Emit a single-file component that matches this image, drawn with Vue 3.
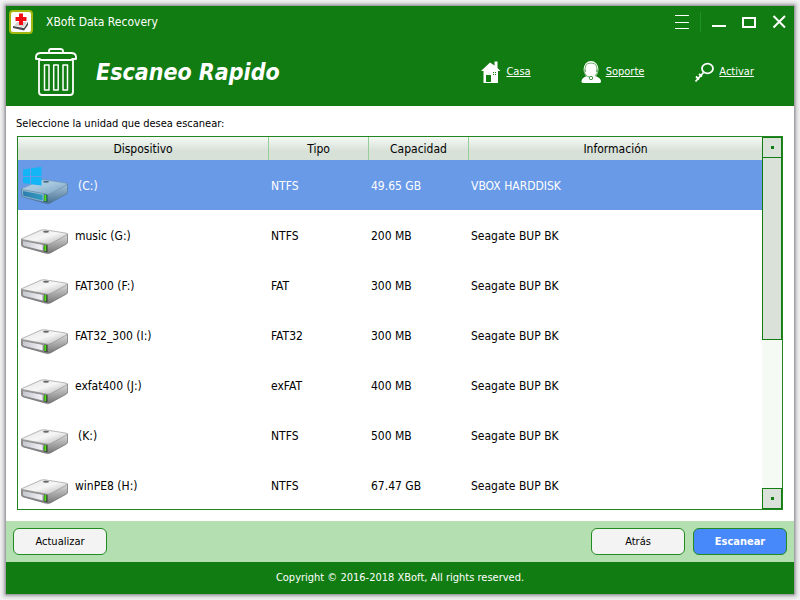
<script setup>
const rows = [
  { name: '(C:)', type: 'NTFS', size: '49.65 GB', info: 'VBOX HARDDISK', active: true, indent: true },
  { name: 'music (G:)', type: 'NTFS', size: '200 MB', info: 'Seagate BUP BK' },
  { name: 'FAT300 (F:)', type: 'FAT', size: '300 MB', info: 'Seagate BUP BK' },
  { name: 'FAT32_300 (I:)', type: 'FAT32', size: '300 MB', info: 'Seagate BUP BK' },
  { name: 'exfat400 (J:)', type: 'exFAT', size: '400 MB', info: 'Seagate BUP BK' },
  { name: '(K:)', type: 'NTFS', size: '500 MB', info: 'Seagate BUP BK', indent: true },
  { name: 'winPE8 (H:)', type: 'NTFS', size: '67.47 GB', info: 'Seagate BUP BK' },
]
</script>

<template>
  <div class="frame">
    <div class="window">
      <header class="top">
        <div class="titlebar">
          <svg class="logo" viewBox="0 0 24 24" aria-hidden="true">
            <rect x="1" y="1" width="22" height="22" rx="3" fill="#fff" stroke="#a3b80e" stroke-width="2" />
            <path d="M4 16l11 2 4-6v3l-4 5.500L4 18z" fill="#4d4d4d" />
            <path d="M5 15.500l3-3.500 10 0-3.500 5z" fill="#d5d5d5" />
            <path d="M10 3.500h4V7h3.500v4H14v4h-4v-4H6.500V7H10z" fill="#f30d12" />
          </svg>
          <span class="app-name">XBoft Data Recovery</span>
          <div class="controls">
            <button class="ctl" type="button" aria-label="Menú">
              <svg viewBox="0 0 16 16"><path d="M1 1.500h14M1 8.500h14M1 14.500h14" stroke="#fff" stroke-width="1" /></svg>
            </button>
            <span class="split"></span>
            <button class="ctl" type="button" aria-label="Minimizar">
              <svg viewBox="0 0 16 16"><path d="M1 12h14" stroke="#fff" stroke-width="2" /></svg>
            </button>
            <button class="ctl" type="button" aria-label="Maximizar">
              <svg viewBox="0 0 16 16"><path d="M2 4h12v9H2z" fill="none" stroke="#fff" stroke-width="2" /></svg>
            </button>
            <button class="ctl" type="button" aria-label="Cerrar">
              <svg viewBox="0 0 16 16"><path d="M2.500 2l11.500 11.500M14 2L2.500 13.500" stroke="#fff" stroke-width="2" /></svg>
            </button>
          </div>
        </div>
        <div class="banner">
          <svg class="trash" viewBox="0 0 42 48" fill="none" stroke="#fff" stroke-width="1.800" stroke-linejoin="round" aria-hidden="true">
            <path d="M14 5V3q0-2 2-2h9q3 0 3 2v2" />
            <path d="M1 11V9q0-4 5-4h30q5 0 5 4v2h-4q0 1-1 1H6q-1 0-1-1z" />
            <path d="M4 12v32q0 3 3 3h28q3 0 3-3V12" />
            <path d="M9.500 17h4.500v25H9.500zM18.700 17h4.500v25h-4.500zM28 17h4.500v25H28z" stroke-width="1.500" />
          </svg>
          <h1>Escaneo Rapido</h1>
          <nav class="links">
            <a href="#casa">
              <svg viewBox="0 0 20 24" aria-hidden="true">
                <path d="M2.500 11H0L9 2.500l4.500 3V1.500h3V8l3 3h-2.500v12H2.500z" fill="#fff" />
                <path d="M5 15h5v7H5zM12 12h1v1h-1zM14 12h1v1h-1zM12 14h1v1h-1zM14 14h1v1h-1z" fill="#117c11" />
              </svg>
              <span>Casa</span>
            </a>
            <a href="#soporte">
              <svg viewBox="0 0 20 24" aria-hidden="true">
                <path d="M.5 21.500q0-4 5.500-5.500h8q6 1.500 6 5.500 0 1.500-2 1.500H2.500q-2 0-2-1.500z" fill="#fff" />
                <ellipse cx="10" cy="9.500" rx="7.500" ry="8.500" fill="#fff" />
                <path d="M4.500 12Q2.500 3 10 3t5.500 9M3 9q-.5 6 6 8.500M17 9q0 4-3 7" fill="none" stroke="#117c11" stroke-width=".6" />
                <circle cx="10" cy="18" r="1.700" fill="#fff" stroke="#117c11" stroke-width=".8" />
              </svg>
              <span>Soporte</span>
            </a>
            <a href="#activar">
              <svg viewBox="0 0 20 24" fill="none" stroke="#fff" stroke-width="1.800" aria-hidden="true">
                <ellipse cx="13.500" cy="8.500" rx="5.500" ry="4.800" />
                <path d="M9.500 12.500L1.500 21.500M2 16.500l3 3M5 14l3 2.500" />
              </svg>
              <span>Activar</span>
            </a>
          </nav>
        </div>
      </header>

      <main class="content">
        <p class="prompt" id="prompt">Seleccione la unidad que desea escanear:</p>
        <div class="list">
          <table aria-labelledby="prompt">
            <colgroup><col class="c-dev"><col class="c-mid"><col class="c-mid"><col></colgroup>
            <thead>
              <tr><th>Dispositivo</th><th>Tipo</th><th>Capacidad</th><th>Información</th></tr>
            </thead>
            <tbody>
              <tr v-for="row in rows" :key="row.name" :class="{ active: row.active }">
                <td>
                  <div class="device" :class="{ indent: row.indent }">
                    <svg class="drive" viewBox="0 1 48 42" aria-hidden="true">
                      <defs>
                        <linearGradient :id="row.active ? 'topBlue' : 'topGrey'" x1="0" y1="0" x2="1" y2="1">
                          <stop offset="0" :stop-color="row.active ? '#b9d3e5' : '#e2e2e2'" />
                          <stop offset=".5" :stop-color="row.active ? '#a4c6dc' : '#f6f6f6'" />
                          <stop offset="1" :stop-color="row.active ? '#729bbd' : '#b0b0b0'" />
                        </linearGradient>
                        <linearGradient :id="row.active ? 'sideBlue' : 'sideGrey'" x1="0" y1="0" x2="0" y2="1">
                          <stop offset="0" :stop-color="row.active ? '#a6c4d9' : '#dcdcdc'" />
                          <stop offset="1" :stop-color="row.active ? '#4a7294' : '#777'" />
                        </linearGradient>
                        <linearGradient :id="row.active ? 'faceBlue' : 'faceGrey'" x1="0" y1="0" x2="1" y2="0">
                          <stop offset="0" :stop-color="row.active ? '#2f7cac' : '#c5c5cd'" />
                          <stop offset="1" :stop-color="row.active ? '#2f9abf' : '#f4f4fa'" />
                        </linearGradient>
                      </defs>
                      <path d="M3 33l23 7q3 1 5-1l16-10v-4L28 36z" fill="#000" opacity=".2" />
                      <path d="M1.500 25l26 5 20-10v8q0 1-1 2L31 38.500q-2 1-5 .5L3.500 33q-2-.5-2-2z" :fill="row.active ? 'url(#sideBlue)' : 'url(#sideGrey)'" :stroke="row.active ? '#527a9c' : '#6c6c6c'" stroke-width=".7" />
                      <path d="M2 24.500L20 16.500q2-1 5-.7l20.500 3.200q3 .7 1 2L31 29.500q-2 1-5 .5L2.500 25.500q-1.500-.5-.5-1z" :fill="row.active ? 'url(#topBlue)' : 'url(#topGrey)'" :stroke="row.active ? '#6b91b0' : '#8c8c8c'" stroke-width=".6" />
                      <path d="M2.500 26.500L23 30.500v6.500L4.500 32.500q-2-.5-2-2z" :fill="row.active ? 'url(#faceBlue)' : 'url(#faceGrey)'" :stroke="row.active ? '#9dc4da' : '#777'" stroke-width=".7" />
                      <path d="M24 30.500l3.500.4v7.100L24 37.200z" :fill="row.active ? '#195858' : '#333'" />
                      <path d="M24.300 31h2v6h-2z" fill="#4fdf18" />
                      <ellipse cx="26" cy="17.800" rx="3" ry="1" :fill="row.active ? '#4b6d8c' : '#666'" />
                      <path v-if="row.active" d="M3 5.500l7-1V12H3zM11 4.300L21.500 3v9H11zM3 13h7v7l-7-1zM11 13h10.500v8.500L11 20.200z" fill="#14b5f7" />
                    </svg>
                    <span>{{ row.name }}</span>
                  </div>
                </td>
                <td>{{ row.type }}</td>
                <td>{{ row.size }}</td>
                <td>{{ row.info }}</td>
              </tr>
            </tbody>
          </table>
          <div class="scroll">
            <button type="button" class="step" aria-label="Subir"></button>
            <div class="track"><div class="thumb"></div></div>
            <button type="button" class="step" aria-label="Bajar"></button>
          </div>
        </div>
      </main>

      <div class="actions">
        <button type="button" class="btn">Actualizar</button>
        <span class="grow"></span>
        <button type="button" class="btn">Atrás</button>
        <button type="button" class="btn primary">Escanear</button>
      </div>
      <footer>Copyright © 2016-2018 XBoft, All rights reserved.</footer>
    </div>
  </div>
</template>

<style>
body {
  background: #f4f4f4;
}
</style>

<style scoped>
* {
  box-sizing: border-box;
}
.frame {
  min-height: 100vh;
  padding: 6px;
  display: flex;
  font: 12px/16px "DejaVu Sans Condensed", "Noto Sans", sans-serif;
  color: #000;
}
.window {
  flex: 1;
  min-width: 0;
  display: flex;
  flex-direction: column;
  background: #fff;
  box-shadow: 0 0 2px 1px #8d8d94, 0 0 4px 3px #c4c4c8;
}
button {
  font: inherit;
  margin: 0;
  padding: 0;
}
.top {
  background: #117c11;
  color: #fff;
  height: 100px;
}
.titlebar {
  display: flex;
  align-items: center;
  height: 31px;
  padding: 0 7px 0 3px;
}
.logo {
  width: 24px;
  height: 24px;
  margin-right: 13px;
}
.controls {
  margin-left: auto;
  display: flex;
  align-items: center;
  gap: 14px;
}
.ctl {
  width: 16px;
  height: 16px;
  border: 0;
  background: none;
}
.ctl svg {
  display: block;
}
.split {
  width: 1px;
  height: 20px;
  margin: 0 -4px 0 -4px;
  background: #1f931f;
}
.banner {
  display: flex;
  align-items: center;
  height: 70px;
  padding: 0 40px 0 29px;
}
.trash {
  width: 42px;
  height: 48px;
}
h1 {
  margin: 0 0 0 19px;
  font: italic bold 23px/28px "DejaVu Sans Condensed", "Noto Sans", sans-serif;
}
.links {
  margin-left: auto;
  display: flex;
  gap: 50px;
}
.links a {
  display: flex;
  align-items: center;
  gap: 5px;
  color: #fff;
  font-size: 11px;
}
.links svg {
  width: 20px;
  height: 24px;
}
.content {
  flex: 1;
  display: flex;
  flex-direction: column;
  padding: 10px 11px 11px;
}
.prompt {
  margin: 0 0 4px -1px;
  font-size: 11px;
}
.list {
  flex: 1;
  display: flex;
  border: 1px solid #228522;
}
table {
  flex: 1;
  table-layout: fixed;
  border-collapse: separate;
  border-spacing: 0;
  width: 100%;
}
.c-dev {
  width: 251px;
}
.c-mid {
  width: 100px;
}
th {
  height: 23px;
  padding: 0;
  font-weight: normal;
  background: linear-gradient(#f5f9f5, #d8e1d8 60%);
  border-right: 1px solid #94cf98;
}
th:last-child {
  border-right: 0;
}
td {
  height: 50px;
  padding: 2px 2px 0;
}
tbody tr:last-child td {
  height: 49px;
}
.active {
  background: #699ae7;
  color: #fff;
}
.device {
  display: flex;
  align-items: center;
  gap: 7px;
}
.indent {
  gap: 10px;
}
.drive {
  width: 48px;
  height: 42px;
}
.scroll {
  width: 20px;
  display: flex;
  flex-direction: column;
  background: #f5faf5;
}
.step {
  display: grid;
  place-items: center;
  height: 21px;
  border: 1px solid #117c11;
  background: #d9e1d9;
}
.step::before {
  content: "";
  width: 3px;
  height: 3px;
  background: #117c11;
}
.track {
  flex: 1;
}
.thumb {
  height: 55%;
  background: #d9e1d9;
  border: 1px solid #117c11;
  border-top: 0;
}
.actions {
  display: flex;
  align-items: center;
  gap: 8px;
  height: 41px;
  padding: 0 7px;
  background: #b4dfb0;
}
.grow {
  flex: 1;
}
.btn {
  width: 94px;
  height: 27px;
  border: 1px solid #228b22;
  border-radius: 6px;
  background: #f3f3f3;
  color: #000;
  font-size: 11px;
}
.primary {
  background: #4788fa;
  color: #fff;
  font-weight: bold;
}
footer {
  height: 32px;
  line-height: 32px;
  text-align: center;
  font-size: 11px;
  background: #117c11;
  color: #fff;
}
</style>
